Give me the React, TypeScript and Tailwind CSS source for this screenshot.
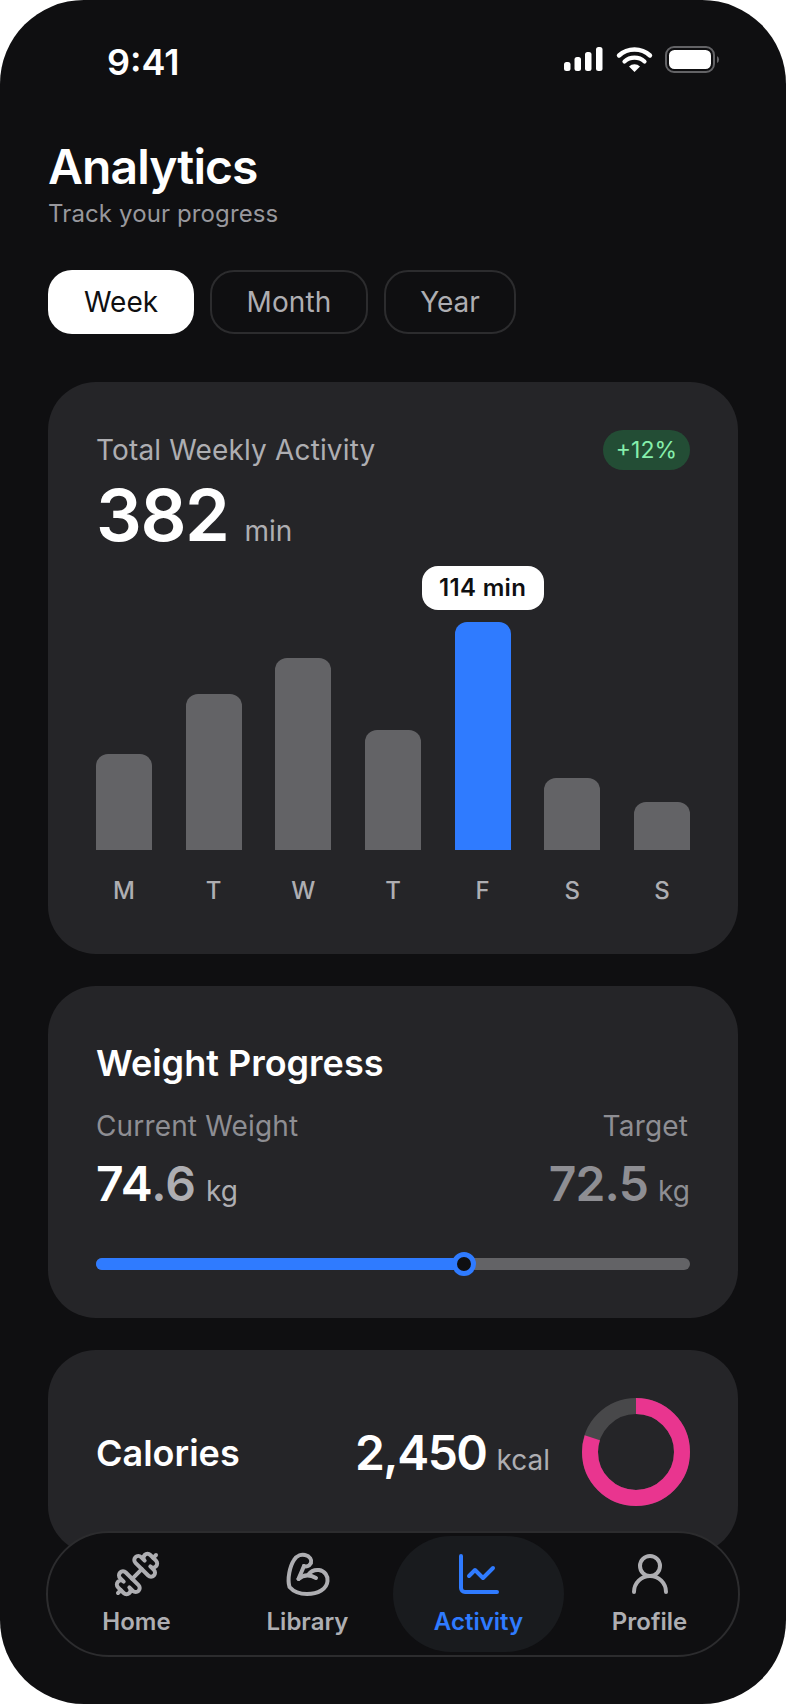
import { ChartLine, Dumbbell, UserRound } from 'lucide-react';

const bars = [
  { day: 'M', height: 'h-[96px]', active: false },
  { day: 'T', height: 'h-[156px]', active: false },
  { day: 'W', height: 'h-[192px]', active: false },
  { day: 'T', height: 'h-[120px]', active: false },
  { day: 'F', height: 'h-[228px]', active: true },
  { day: 'S', height: 'h-[72px]', active: false },
  { day: 'S', height: 'h-[48px]', active: false },
];

function BicepsIcon({ size, strokeWidth }: { size: number; strokeWidth: number }) {
  return (
    <svg
      width={size}
      height={size}
      viewBox="4 4 48 48"
      fill="none"
      stroke="currentColor"
      strokeWidth={strokeWidth * 2}
      strokeLinecap="round"
      strokeLinejoin="round"
      aria-hidden="true"
    >
      <path d="M28.500 28.500c2.500-3.500 6.500-5 10.500-4.500 6 1 9 6 8.500 11-.5 8-9.500 13-20.500 13-7 0-14-3-17.500-7C7 33 10 20 14 14c3-5 8-6 11-5 5 1 7 5 6 8-2 3.500-5 4-7 3" />
      <path d="M24 20c-2 5-4 9-5.500 13" />
      <path d="M18.500 33c4.500-4 10.500-5 17.500-1" />
    </svg>
  );
}

const navItems = [
  { label: 'Home', Icon: Dumbbell, active: false },
  { label: 'Library', Icon: BicepsIcon, active: false },
  { label: 'Activity', Icon: ChartLine, active: true },
  { label: 'Profile', Icon: UserRound, active: false },
];

function StatusIcons() {
  return (
    <svg width="157" height="28" viewBox="0 0 157 28" fill="none" aria-hidden="true">
      {/* signal */}
      <rect x="0" y="16" width="6.5" height="9" rx="2.5" fill="#fff" />
      <rect x="10.5" y="11" width="6.5" height="14" rx="2.5" fill="#fff" />
      <rect x="21" y="6" width="6.5" height="19" rx="2.5" fill="#fff" />
      <rect x="32" y="1" width="6.5" height="24" rx="2.5" fill="#fff" />
      {/* wifi */}
      <path d="M55 9.5a23 23 0 0 1 31 0" stroke="#fff" strokeWidth="4.4" strokeLinecap="round" />
      <path d="M60.5 15.5a15 15 0 0 1 20 0" stroke="#fff" strokeWidth="4.2" strokeLinecap="round" />
      <path d="M65 20.4a8 8 0 0 1 11 0l-5.5 5.6z" fill="#fff" />
      {/* battery */}
      <rect x="102" y="1" width="48" height="25" rx="8" stroke="#636366" strokeWidth="2" />
      <rect x="105" y="4" width="42" height="19" rx="5.5" fill="#fff" />
      <path d="M153 10a4 4 0 0 1 0 7z" fill="#636366" />
    </svg>
  );
}

export default function App() {
  return (
    <div className="relative h-[1704px] w-[786px] overflow-hidden rounded-[84px] bg-[#0f0f11] font-['Inter',sans-serif] text-white">
      {/* Status bar */}
      <div className="flex h-[139px] items-start justify-between pl-[107px] pr-[65px] pt-[41px]">
        <span className="text-[36px] font-semibold leading-[42px]">9:41</span>
        <div className="pt-[5px]">
          <StatusIcons />
        </div>
      </div>

      <div className="px-[48px]">
        <h1 className="text-[48px] font-semibold leading-[56px] tracking-[-0.9px]">Analytics</h1>
        <p className="mt-[3px] text-[24px] leading-[32px] tracking-[0.12px] text-[#98989d]">Track your progress</p>

        <div className="mt-[40px] flex gap-[16px]">
          <button className="h-[64px] w-[146px] rounded-[24px] bg-white text-[28px] text-[#0f0f11]">Week</button>
          <button className="h-[64px] w-[158px] rounded-[24px] border-2 border-[#2c2c2e] text-[28px] tracking-[0.15px] text-[#aeaeb2]">Month</button>
          <button className="h-[64px] w-[132px] rounded-[24px] border-2 border-[#2c2c2e] text-[28px] text-[#aeaeb2]">Year</button>
        </div>

        {/* Weekly activity */}
        <section className="mt-[48px] h-[572px] rounded-[48px] bg-[#252528] px-[48px] pt-[51px]">
          <div className="flex items-start justify-between">
            <div>
              <div className="text-[28px] leading-[34px] tracking-[0.15px] text-[#aeaeb2]">Total Weekly Activity</div>
              <div className="mt-[5px] flex items-baseline gap-[16px]">
                <span className="text-[72px] font-semibold leading-[86px] tracking-[-1.4px]">382</span>
                <span className="text-[28px] text-[#aeaeb2]">min</span>
              </div>
            </div>
            <span className="-mt-[3px] rounded-full bg-[#234d35] px-[13px] py-[5px] text-[23px] leading-[30px] text-[#86efac]">+12%</span>
          </div>
          <div className="mt-[16px] flex h-[276px] items-end justify-between">
            {bars.map((bar, i) => (
              <div key={i} className="relative w-[56px]">
                {bar.active && (
                  <div className="absolute bottom-[calc(100%+12px)] left-1/2 flex h-[44px] w-[122px] -translate-x-1/2 items-center justify-center rounded-[16px] bg-white text-[24px] font-semibold tracking-[0.3px] text-[#0f0f11]">
                    114 min
                  </div>
                )}
                <div className={`${bar.height} rounded-t-[12px] ${bar.active ? 'bg-[#2f7bff]' : 'bg-[#636366]'}`} />
              </div>
            ))}
          </div>
          <div className="mt-[26px] flex justify-between">
            {bars.map((bar, i) => (
              <span key={i} className="w-[56px] text-center text-[24px] font-medium leading-[30px] text-[#aeaeb2]">
                {bar.day}
              </span>
            ))}
          </div>
        </section>

        {/* Weight */}
        <section className="mt-[32px] h-[332px] rounded-[48px] bg-[#252528] px-[48px] pt-[55px]">
          <h2 className="text-[36px] font-semibold leading-[44px]">Weight Progress</h2>
          <div className="mt-[24px] flex justify-between">
            <div>
              <div className="text-[28px] leading-[34px] tracking-[0.15px] text-[#8e8e93]">Current Weight</div>
              <div className="mt-[12px] flex items-baseline gap-[10px]">
                <span className="text-[48px] font-semibold leading-[58px]">
                  74<span className="text-[#aeaeb2]">.6</span>
                </span>
                <span className="text-[28px] text-[#aeaeb2]">kg</span>
              </div>
            </div>
            <div className="flex flex-col items-end">
              <div className="pr-[2px] text-[28px] leading-[34px] tracking-[0.15px] text-[#8e8e93]">Target</div>
              <div className="mt-[12px] flex items-baseline gap-[10px]">
                <span className="text-[48px] font-semibold leading-[58px] tracking-[-0.8px] text-[#8e8e93]">72.5</span>
                <span className="text-[28px] text-[#8e8e93]">kg</span>
              </div>
            </div>
          </div>
          <div className="relative mt-[45px] h-[12px] rounded-full bg-[#636366]">
            <div className="h-full w-[62%] rounded-full bg-[#2f7bff]" />
            <div className="absolute left-[62%] top-1/2 size-[24px] -translate-x-1/2 -translate-y-1/2 rounded-full border-[5px] border-[#2f7bff] bg-[#0f0f11]" />
          </div>
        </section>

        {/* Calories */}
        <section className="mt-[32px] flex h-[204px] items-center justify-between rounded-[48px] bg-[#252528] px-[48px]">
          <span className="mt-[2px] text-[36px] font-semibold">Calories</span>
          <div className="flex items-center gap-[32px]">
            <div className="mt-[2px] flex items-baseline gap-[10px]">
              <span className="text-[48px] font-semibold tracking-[-1.5px]">2,450</span>
              <span className="text-[28px] text-[#aeaeb2]">kcal</span>
            </div>
            <svg width="108" height="108" viewBox="0 0 108 108" fill="none" aria-hidden="true">
              <circle cx="54" cy="54" r="46" stroke="#48484a" strokeWidth="16" />
              <circle
                cx="54"
                cy="54"
                r="46"
                stroke="#e9358f"
                strokeWidth="16"
                strokeDasharray="231 289"
                transform="rotate(-90 54 54)"
              />
            </svg>
          </div>
        </section>
      </div>

      {/* Tab bar */}
      <nav className="absolute left-[46px] top-[1531px] flex h-[126px] w-[694px] items-center justify-center rounded-full border-2 border-[#2c2c2e] bg-[#0f0f11]">
        {navItems.map(({ label, Icon, active }) => (
          <div
            key={label}
            className={`flex h-[116px] w-[171px] flex-col items-center justify-center gap-[9px] rounded-full pb-[2px] ${
              active ? 'bg-[#191b1e] text-[#2f7bff]' : 'text-[#aeaeb2]'
            }`}
          >
            <Icon size={48} strokeWidth={2} />
            <span className="text-[24px] font-semibold leading-[30px]">{label}</span>
          </div>
        ))}
      </nav>
    </div>
  );
}
